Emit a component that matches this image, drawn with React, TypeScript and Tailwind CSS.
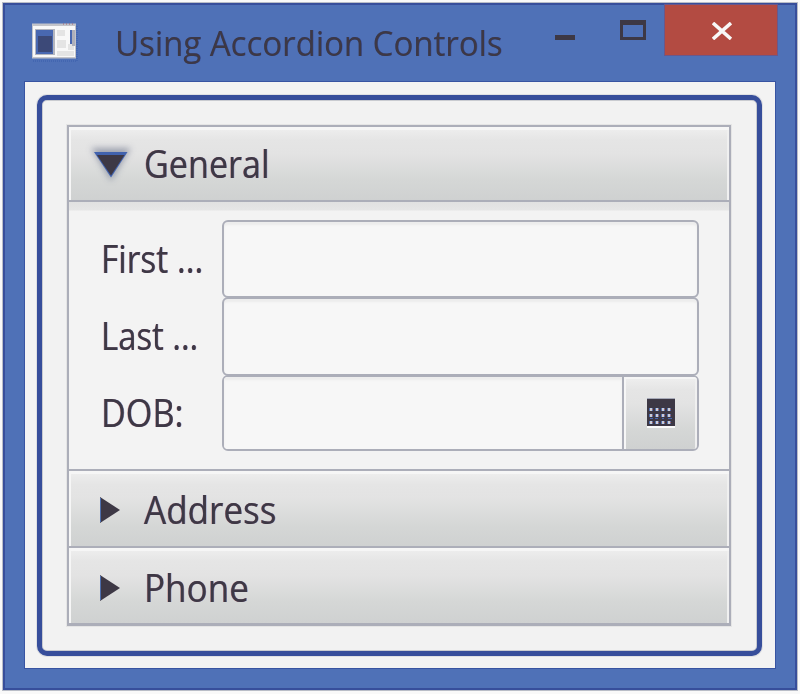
import type { ReactNode } from "react";

const headerFill =
  "bg-[linear-gradient(#efefef_0%,#e5e5e5_18%,#e3e3e3_36%,#d5d7d6_72%,#cfd1d1_100%)]";

const colorFringe =
  "[text-shadow:-0.5px_0_0_rgba(179,75,66,0.55),0.5px_0_0_rgba(60,90,175,0.6)]";

function Header({
  title,
  open = false,
  className,
  textClass,
}: {
  title: string;
  open?: boolean;
  className: string;
  textClass: string;
}) {
  return (
    <button
      className={`flex w-full items-center border-[#acaeb9] text-left shadow-[inset_2px_3px_0_#f6f6f6,inset_-2px_0_0_#f0f0f0] ${headerFill} ${className}`}
    >
      {open ? (
        <svg className="ml-[14px] h-[50px] w-[61px] shrink-0" viewBox="0 0 61 50">
          <defs>
            <filter id="glow" x="-50%" y="-50%" width="200%" height="200%">
              <feGaussianBlur stdDeviation="3" />
            </filter>
          </defs>
          <path d="M8 9H48L28 42Z" fill="#858b9d" opacity="0.75" filter="url(#glow)" />
          <path d="M11 13H44.500L28 38.500Z" fill="#4162ae" />
          <path d="M14 16H41.500L28 36.500Z" fill="#3d3845" />
        </svg>
      ) : (
        <svg className="ml-[29px] h-[28px] w-[46px] shrink-0" viewBox="0 0 46 28">
          <path d="M2 1L22 14L2 27Z" fill="#3d3845" />
          <path d="M2.500 2V26" stroke="#4d6ead" />
        </svg>
      )}
      <span className={`block origin-left whitespace-nowrap ${colorFringe} ${textClass}`}>{title}</span>
    </button>
  );
}

function Row({
  label,
  textClass,
  className,
  children,
}: {
  label: string;
  textClass: string;
  className: string;
  children: ReactNode;
}) {
  return (
    <div className={`flex ${className}`}>
      <label className="flex w-[121px] shrink-0 items-center">
        <span className={`block origin-left whitespace-nowrap ${colorFringe} ${textClass}`}>{label}</span>
      </label>
      {children}
    </div>
  );
}

function CalendarIcon() {
  return (
    <svg className="h-[30px] w-[28px]" viewBox="0 0 28 30" shapeRendering="crispEdges">
      <rect y="28" width="28" height="2" fill="#fafafa" />
      <rect width="28" height="28" fill="#3d3845" />
      <rect width="28" height="1" fill="#a7aab8" />
      {[10, 16, 23].map((y) =>
        [3, 9, 15, 21].map((x) => (
          <g key={`${x}-${y}`}>
            <rect x={x - 1} y={y} width="4" height="3" fill="#526fae" />
            <rect x={x} y={y} width="2" height="3" fill="#c9cdd8" />
            <rect x={x + 2} y={y + 1} width="1" height="1" fill="#ad5d5b" />
          </g>
        )),
      )}
      <path d="M3 20.500h3M8 20.500h3M15 20.500h2M21 20.500h4" stroke="#4666af" />
    </svg>
  );
}

export default function App() {
  return (
    <div className="h-[694px] w-[800px] overflow-hidden bg-[#f9f9f9] p-[3px] font-['Open_Sans','Noto_Sans',sans-serif] text-[#3d3845]">
      <main className="flex h-[687px] w-[794px] flex-col border-2 border-[#374e9b] bg-[#4f71b7] shadow-[0_0_0_1px_#b9bdc7]">
        <header className="flex h-[77px] shrink-0">
          <svg className="ml-[26px] mt-[17px] h-[40px] w-[48px] shrink-0" viewBox="31 22 48 40">
            <path d="M33 61H77V25" fill="none" stroke="#395caa" strokeDasharray="1 1" />
            <rect x="32" y="23.500" width="44" height="35" fill="#c3c4c9" />
            <rect x="33" y="26" width="42" height="31" fill="#f8f8f8" />
            <rect x="35" y="29" width="20" height="26" fill="#b3b5be" />
            <rect x="36" y="30" width="17" height="24" fill="#4968b1" />
            <rect x="38" y="36" width="14" height="16" fill="#3c4978" />
            <path d="M57 30H65V36H57ZM57 40H66V48H57ZM57 51H74V56H57ZM68 44H74V50H68Z" fill="#e4e4e4" />
            <rect x="70" y="30" width="2" height="14" fill="#4968b1" />
            <rect x="72" y="30" width="3" height="16" fill="#aeb0bb" />
            <path d="M63 24H74" stroke="#a56370" strokeDasharray="1 2" />
          </svg>
          <h1 className="ml-[36px] mt-[13px] w-[420px] origin-left scale-x-[0.942] whitespace-nowrap text-[35px] leading-[50px] [text-shadow:0.5px_0_0_#374e9b]">
            Using Accordion Controls
          </h1>
          <div className="ml-auto mr-[18px] flex">
            <svg className="h-[50px] w-[110px]" viewBox="0 0 110 50" shapeRendering="crispEdges">
              <path d="M0 32.500H20" stroke="#3d3845" strokeWidth="5" />
              <path d="M66.500 16.500H89.500V33.500H66.500Z" fill="none" stroke="#3d3845" strokeWidth="3" />
              <path d="M65 17.500H91" stroke="#3d3845" strokeWidth="5" />
            </svg>
            <button className="flex h-[50px] w-[112px] items-start justify-center bg-[#b34b42] pt-[17px] shadow-[0_0_0_1px_#6b5789]">
              <svg className="ml-[2px] h-[18px] w-[20px]" viewBox="0 0 20 18">
                <path d="M1 1L19 17M19 1L1 17" stroke="#f8f8f8" strokeWidth="3.500" />
              </svg>
            </button>
          </div>
        </header>
        <div className="ml-[20px] h-[586px] w-[750px] bg-[#f3f3f3] px-[12px] py-[13px] shadow-[0_0_0_1px_#3854a2]">
          <div className="h-[561px] w-[725px] rounded-[10px] border-[5px] border-[#374e9b] bg-[#f2f2f2] pl-[25px] pt-[25px] shadow-[inset_0_0_0_1px_#c9cbd0,0_0_0_1px_#dfe0e3]">
            <section className="h-[501px] w-[664px] border-x-2 border-[#acaeb9] shadow-[0_0_0_1px_#e5e5e5]">
              <Header
                open
                title="General"
                className="h-[77px] border-y-2"
                textClass="mt-px scale-x-[0.91] text-[37.500px] leading-[50px]"
              />
              <div className="h-[267px] bg-[#f3f3f3] bg-[linear-gradient(#e1e1e1_0px,#e6e6e6_8px,#f3f3f3_9px)] pl-[32px] pt-[18px]">
                <Row label="First ..." className="h-[77px]" textClass="-mt-[2px] scale-x-[0.88] text-[38px] leading-[50px]">
                  <input
                    aria-label="First name"
                    className="h-[78px] w-[477px] rounded-[6px] border-2 border-[#acaeb9] bg-[#f7f7f7] shadow-[inset_0_3px_2px_#ededed]"
                  />
                </Row>
                <Row label="Last ..." className="h-[78px]" textClass="-mt-[2px] scale-x-[0.865] text-[38px] leading-[50px]">
                  <input
                    aria-label="Last name"
                    className="h-[79px] w-[477px] rounded-[6px] border-2 border-[#acaeb9] bg-[#f7f7f7] shadow-[inset_0_3px_2px_#ededed]"
                  />
                </Row>
                <Row label="DOB:" className="h-[76px]" textClass="-mt-[2px] scale-x-[0.9] text-[38px] leading-[50px]">
                  <div className="flex h-[76px] w-[477px] overflow-hidden rounded-[6px] border-2 border-[#acaeb9] bg-[#f7f7f7]">
                    <input
                      aria-label="Date of birth"
                      className="min-w-0 flex-1 bg-[#f7f7f7] shadow-[inset_0_3px_2px_#ededed]"
                    />
                    <button
                      className={`flex w-[75px] items-center justify-center border-l-2 border-[#acaeb9] shadow-[inset_2px_2px_0_#f6f6f6,inset_-2px_0_0_#f0f0f0] ${headerFill}`}
                    >
                      <CalendarIcon />
                    </button>
                  </div>
                </Row>
              </div>
              <Header
                title="Address"
                className="h-[77px] border-t-2 pt-[3px]"
                textClass="scale-x-[0.935] text-[37.500px] leading-[50px]"
              />
              <Header
                title="Phone"
                className="h-[80px] border-b-[3px] border-t-2 pt-[4px]"
                textClass="scale-x-[0.935] text-[37.500px] leading-[50px]"
              />
            </section>
          </div>
        </div>
      </main>
    </div>
  );
}
